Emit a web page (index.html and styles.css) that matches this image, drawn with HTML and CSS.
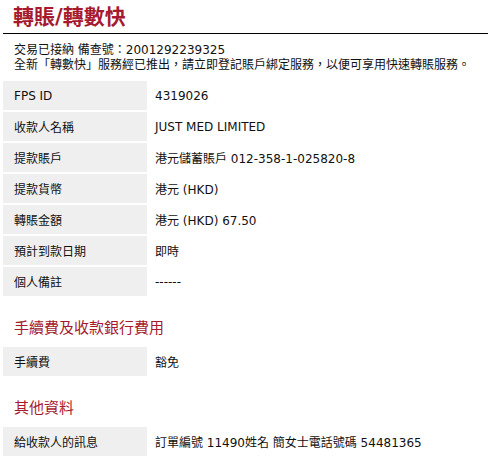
FILE: index.html
```html
<!DOCTYPE html>
<html lang="zh-Hant">
<head>
<meta charset="utf-8">
<title>轉賬/轉數快</title>
<link rel="stylesheet" href="styles.css">
</head>
<body>
<div class="page">
  <h1 class="title">轉賬/轉數快</h1>
  <div class="notice">
    <p>交易已接納 備查號：2001292239325</p>
    <p>全新「轉數快」服務經已推出，請立即登記賬戶綁定服務，以便可享用快速轉賬服務。</p>
  </div>
  <div class="rows">
    <div class="row"><div class="label">FPS ID</div><div class="value">4319026</div></div>
    <div class="row"><div class="label">收款人名稱</div><div class="value">JUST MED LIMITED</div></div>
    <div class="row"><div class="label">提款賬戶</div><div class="value">港元儲蓄賬戶 012-358-1-025820-8</div></div>
    <div class="row"><div class="label">提款貨幣</div><div class="value">港元 (HKD)</div></div>
    <div class="row"><div class="label">轉賬金額</div><div class="value">港元 (HKD) 67.50</div></div>
    <div class="row"><div class="label">預計到款日期</div><div class="value">即時</div></div>
    <div class="row"><div class="label">個人備註</div><div class="value">------</div></div>
  </div>
  <h2 class="section">手續費及收款銀行費用</h2>
  <div class="rows">
    <div class="row"><div class="label">手續費</div><div class="value">豁免</div></div>
  </div>
  <h2 class="section">其他資料</h2>
  <div class="rows">
    <div class="row"><div class="label">給收款人的訊息</div><div class="value">訂單編號 11490姓名 簡女士電話號碼 54481365</div></div>
  </div>
</div>
</body>
</html>
```
FILE: styles.css
```css
html, body {
  margin: 0;
  padding: 0;
  background: #ffffff;
}
body {
  font-family: "DejaVu Sans", "Noto Sans CJK TC", sans-serif;
  font-size: 12px;
  color: #111111;
}
.page {
  padding: 0 3px;
}
.title {
  margin: 0;
  padding: 4px 0 3px 10px;
  font-size: 21px;
  line-height: 26px;
  font-weight: bold;
  color: #a6192e;
  border-bottom: 1px solid #000000;
}
.notice {
  padding: 9px 0 0 11px;
  margin-bottom: 8px;
}
.notice p {
  margin: 0;
  line-height: 15px;
}
.rows {
  display: flex;
  flex-direction: column;
  gap: 2px;
}
.row {
  display: flex;
  height: 29px;
  align-items: center;
}
.label {
  width: 133px;
  height: 100%;
  display: flex;
  align-items: center;
  padding-left: 11px;
  background: #efefef;
  flex-shrink: 0;
}
.value {
  padding-left: 8px;
}
.section {
  margin: 0;
  padding: 23px 0 10px 11px;
  font-size: 15px;
  line-height: 18px;
  font-weight: normal;
  color: #a6192e;
}
```
